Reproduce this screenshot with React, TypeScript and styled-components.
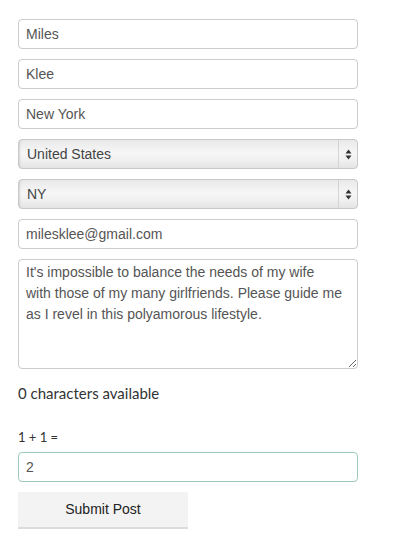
import React from 'react';
import styled, { createGlobalStyle, css } from 'styled-components';

const GlobalStyle = createGlobalStyle`
  html, body {
    margin: 0;
    padding: 0;
    background: #fff;
  }
  * {
    box-sizing: border-box;
  }
`;

const Page = styled.form`
  display: flex;
  flex-direction: column;
  align-items: flex-start;
  padding: 19px 0 0 18px;
  font-family: 'Liberation Sans', Arial, sans-serif;
`;

const fieldBase = css`
  display: block;
  width: 340px;
  margin: 0 0 10px;
  padding: 0 7px;
  border: 1px solid #cccccc;
  border-radius: 4px;
  font-family: 'Liberation Sans', Arial, sans-serif;
  font-size: 14px;
  color: #555555;
  background: #fff;
  outline: none;
`;

const TextInput = styled.input<{ $valid?: boolean }>`
  ${fieldBase}
  height: 30px;
  border-color: ${({ $valid }) => ($valid ? '#9ecbb6' : '#cccccc')};
`;

const SelectWrap = styled.div`
  position: relative;
  width: 340px;
  height: 30px;
  margin-bottom: 10px;
`;

const SelectStyled = styled.select`
  ${fieldBase}
  appearance: none;
  -webkit-appearance: none;
  height: 30px;
  margin: 0;
  padding-left: 8px;
  color: #444;
  border-color: #c8c8c8;
  background: linear-gradient(to bottom, #e9e9e9 0%, #f6f6f6 45%, #f1f1f1 70%, #e4e4e4 100%);
  box-shadow: inset 2px 0 2px -1px rgba(0, 0, 0, 0.12);
`;

const Stepper = styled.span`
  position: absolute;
  top: 1px;
  right: 1px;
  bottom: 1px;
  width: 19px;
  display: flex;
  align-items: center;
  justify-content: center;
  border-left: 1px solid #d4d4d4;
  pointer-events: none;
`;

const TextArea = styled.textarea`
  ${fieldBase}
  height: 110px;
  margin-bottom: 0;
  padding: 2px 7px;
  line-height: 21px;
  resize: vertical;
`;

const Counter = styled.p`
  margin: 13px 0 0;
  font-family: Lato, 'Open Sans', sans-serif;
  font-size: 15px;
  line-height: 22px;
  color: #333;
`;

const Label = styled.label`
  margin: 24px 0 6px;
  font-family: Lato, 'Open Sans', sans-serif;
  font-size: 13px;
  line-height: 18px;
  color: #333;
`;

const SubmitButton = styled.button`
  width: 170px;
  height: 37px;
  margin: 0;
  padding: 0 0 2px;
  border: none;
  border-bottom: 2px solid #dcdcdc;
  background: #f3f3f3;
  font-family: 'Liberation Sans', Arial, sans-serif;
  font-size: 14px;
  color: #222;
  cursor: pointer;
`;

const Arrows = () => (
  <svg width="7" height="11" viewBox="0 0 7 11">
    <polygon points="3.5,0.5 6.5,4.5 0.5,4.5" fill="#333" />
    <polygon points="0.5,6.5 6.5,6.5 3.5,10.5" fill="#333" />
  </svg>
);

const Select = ({ value, options }: { value: string; options: string[] }) => (
  <SelectWrap>
    <SelectStyled defaultValue={value}>
      {options.map((o) => (
        <option key={o}>{o}</option>
      ))}
    </SelectStyled>
    <Stepper>
      <Arrows />
    </Stepper>
  </SelectWrap>
);

// line breaks kept where the original textarea wrapped
const message = [
  "It's impossible to balance the needs of my wife",
  'with those of my many girlfriends. Please guide me',
  'as I revel in this polyamorous lifestyle.',
].join('\n');

export default function App() {
  return (
    <>
      <GlobalStyle />
      <Page onSubmit={(e) => e.preventDefault()}>
        <TextInput defaultValue="Miles" />
        <TextInput defaultValue="Klee" />
        <TextInput defaultValue="New York" />
        <Select value="United States" options={['United States', 'Canada']} />
        <Select value="NY" options={['NY', 'CA']} />
        <TextInput type="email" defaultValue="milesklee@gmail.com" />
        <TextArea defaultValue={message} />
        <Counter>0 characters available</Counter>
        <Label htmlFor="captcha">1 + 1 =</Label>
        <TextInput id="captcha" $valid defaultValue="2" />
        <SubmitButton type="submit">Submit Post</SubmitButton>
      </Page>
    </>
  );
}
